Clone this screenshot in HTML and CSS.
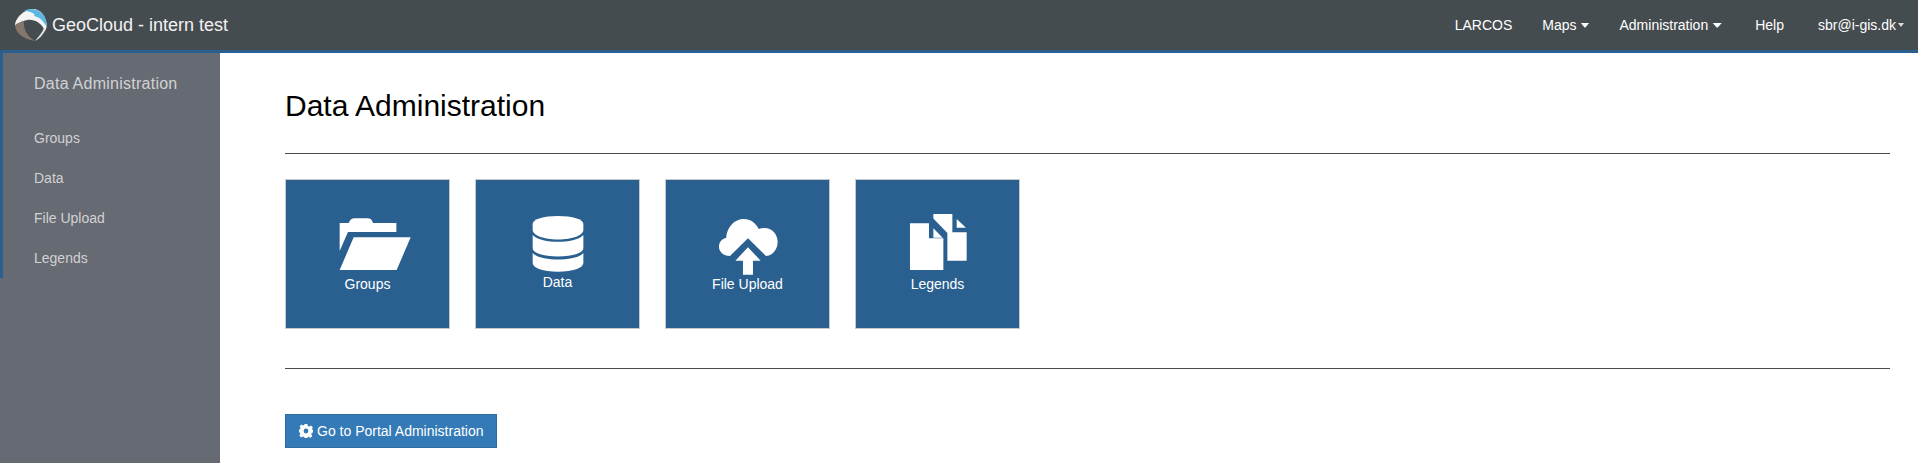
FILE: index.html
```html
<!DOCTYPE html>
<html lang="en">
<head>
<meta charset="utf-8">
<title>GeoCloud - Data Administration</title>
<link rel="stylesheet" href="styles.css">
</head>
<body>
<header class="navbar">
  <a class="brand" href="#">
    <svg class="logo" viewBox="0 0 32 32" aria-hidden="true">
      <path d="M0 15C2 7 9 1 18 0C26 0 32 8 31.7 18L30 22C26 13 19 10 12 11C7 12 3 14 0 17Z" fill="#f4f4f4"/>
      <path d="M9 1.5C13 0 20-.5 24 2C29 5 32 11 31.7 18C28 11 24 8 19 7C21 5 17 3 9 1.5Z" fill="#5bb7e3"/>
      <path d="M0 16C.5 24 8 30 20 32C12 27 8 20 9 12C5 13 2 14 0 16Z" fill="#85766a"/>
      <path d="M30.5 21C28 26 24 30 20 32C24 27 27 24 29 19Z" fill="#e2e2e2"/>
    </svg>
    <span>GeoCloud - intern test</span>
  </a>
  <nav class="nav-right">
    <a class="nav-link" href="#">LARCOS</a>
    <a class="nav-link" href="#">Maps<i class="caret-fa"></i></a>
    <a class="nav-link" href="#">Administration<i class="caret-fa caret-fa-wide"></i></a>
    <a class="nav-link nav-help" href="#">Help</a>
    <a class="nav-link nav-user" href="#">sbr@i-gis.dk<i class="caret-small"></i></a>
  </nav>
</header>
<div class="layout">
  <aside class="sidebar">
    <div class="side-inner">
      <div class="side-title">Data Administration</div>
      <a class="side-link" href="#">Groups</a>
      <a class="side-link" href="#">Data</a>
      <a class="side-link" href="#">File Upload</a>
      <a class="side-link" href="#">Legends</a>
    </div>
  </aside>
  <main class="main">
    <h1 class="title">Data Administration</h1>
    <hr class="rule">
    <div class="tiles">
      <a class="tile" href="#">
        <svg class="tile-icon" viewBox="47.33 40 100 65" aria-hidden="true">
          <path d="M69 53H78C79 50 81 48.3 84 48.3H97C100 48.3 101.5 50 102.3 53H125.7V62H77.3L69 81Z"/>
          <path d="M83 67.3H140L126 100H69Z"/>
        </svg>
        <span class="tile-label">Groups</span>
      </a>
      <a class="tile" href="#">
        <svg class="tile-icon" viewBox="47.33 40 100 65" aria-hidden="true">
          <path d="M72 54C72 49 83 46 97.3 46S122.7 49 122.7 54V60C122.7 65 112 69.5 97.3 69.5S72 65 72 60Z"/>
          <path d="M72 65C77 70 87 71.8 97.3 71.8S118 70 122.7 65V78C122.7 83 112 86.5 97.3 86.5S72 83 72 78Z"/>
          <path d="M72 83C77 88 87 89.5 97.3 89.5S118 88 122.7 83V93C122.7 98 112 101.7 97.3 101.7S72 98 72 93Z"/>
        </svg>
        <span class="tile-label tile-label-raised">Data</span>
      </a>
      <a class="tile" href="#">
        <svg class="tile-icon" viewBox="47.33 40 100 65" aria-hidden="true">
          <path d="M79.3 86C72 86 68.3 81 68.3 77C68.3 72 71.5 68.5 75.5 68C76 57 84 49 93 49C100 49 105 53 108 59C110 58.3 112 58 114 58C121 58 127 64 127 72C127 80 121 86 115.3 86L97.3 68.3Z"/>
          <path d="M97.3 77.3L110 90.7H102.3V104.7H92.3V90.7H84.7Z"/>
        </svg>
        <span class="tile-label">File Upload</span>
      </a>
      <a class="tile" href="#">
        <svg class="tile-icon" viewBox="47.33 40 100 65" aria-hidden="true">
          <path d="M69.3 53.3H88.3V68.3H102.7V100H69.3Z"/>
          <path d="M92.7 58.3L102 67.7H92.7Z"/>
          <path d="M92.7 44H111.7V62.3H126V90.7H106.7V63L92.7 48.5Z"/>
          <path d="M116 49L125.3 57.7H116Z"/>
        </svg>
        <span class="tile-label">Legends</span>
      </a>
    </div>
    <hr class="rule rule-lower">
    <a class="btn" href="#">
      <svg class="gear" viewBox="0 0 14 14" aria-hidden="true">
        <path fill-rule="evenodd" d="M5.6 0H8.4L8.8 2 10.3 2.6 12 1.5 13.9 3.4 12.8 5.1 13.4 5.6 14 6V8.4L12.9 8.8 12.3 10.3 13.3 12 11.4 13.9 9.8 12.8 8.6 13.3 8.3 14H5.7L5.2 12.9 3.9 12.4 2.1 13.4.3 11.5 1.3 9.9.7 8.5 0 8.3V5.7L1 5.2 1.6 3.9.6 2.2 2.4.4 4 1.4 5.3.9ZM7 4.6A2.4 2.4 0 1 0 7 9.4 2.4 2.4 0 1 0 7 4.6Z"/>
      </svg>
      Go to Portal Administration
    </a>
  </main>
</div>
</body>
</html>
```

FILE: styles.css
```css
* { box-sizing: border-box; }
html, body { height: 100%; }
body {
  margin: 0;
  display: flex;
  flex-direction: column;
  font-family: "Liberation Sans", Arial, sans-serif;
  font-size: 14px;
  line-height: 20px;
  color: #000;
  background: #fff;
  overflow: hidden;
}
a { text-decoration: none; }

.navbar {
  flex: none;
  display: flex;
  align-items: center;
  height: 53px;
  padding: 0 14px 0 15px;
  background: #454c50;
  border-bottom: 3px solid #2a6090;
}
.brand {
  display: flex;
  align-items: center;
  gap: 5px;
  color: #f2f2f2;
  font-size: 18px;
}
.logo { width: 32px; height: 32px; flex: none; }
.nav-right { display: flex; margin-left: auto; }
.nav-link {
  display: flex;
  align-items: center;
  padding: 0 15px;
  color: #fff;
  white-space: nowrap;
}
.nav-help { margin-right: 4px; }
.nav-user { padding-right: 0; }
.caret-fa {
  width: 9px;
  height: 5px;
  margin-left: 4px;
  background: #fff;
  clip-path: polygon(0 0, 100% 0, 55% 100%, 45% 100%);
}
.caret-fa-wide { width: 10px; margin-right: 3px; }
.caret-small {
  margin-left: 2px;
  border-top: 4px solid #ddd;
  border-left: 3.5px solid transparent;
  border-right: 3.5px solid transparent;
}

.layout { flex: 1; display: flex; min-height: 0; }
.sidebar { flex: none; width: 220px; background: #666a72; }
.side-inner {
  display: flex;
  flex-direction: column;
  height: 225px;
  border-left: 3px solid #2a6090;
}
.side-title {
  padding: 21px 0 24px 31px;
  color: #d2d2d2;
  font-size: 16px;
  letter-spacing: 0.25px;
}
.side-link {
  display: block;
  padding: 10px 0 10px 31px;
  color: #d2d2d2;
}

.main { flex: 1; padding: 0 28px 0 65px; min-width: 0; }
.title {
  margin: 36px 0 0;
  font-size: 30px;
  line-height: 34px;
  font-weight: 400;
}
.rule { margin: 30px 0 0; border: 0; border-top: 1px solid #4a4a4a; }
.rule-lower { margin-top: 39px; }
.tiles { display: flex; gap: 25px; margin-top: 25px; }
.tile {
  display: flex;
  flex-direction: column;
  align-items: center;
  width: 165px;
  height: 150px;
  padding-top: 30px;
  color: #fff;
  background: #2a6090;
  border: 1px solid #c6cacd;
}
.tile-icon { width: 100px; height: 65px; flex: none; overflow: visible; fill: #fff; }
.tile-label { line-height: 18px; }
.tile-label-raised { margin-top: -2px; }
.btn {
  display: inline-flex;
  align-items: center;
  gap: 4px;
  height: 34px;
  margin-top: 45px;
  padding: 0 12px 0 13px;
  color: #fff;
  background: #337ab7;
  border: 1px solid #2e6da4;
}
.gear { width: 14px; height: 14px; fill: #fff; flex: none; }
```
